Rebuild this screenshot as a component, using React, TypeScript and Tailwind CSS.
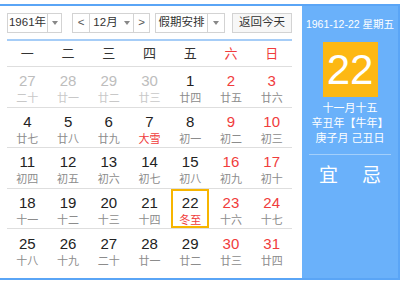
import React from 'react';

type Day = { n: number; l: string; muted?: boolean; red?: boolean; fest?: boolean; sel?: boolean };

const weekNames = ['一', '二', '三', '四', '五', '六', '日'];

const rows: Day[][] = [
  [
    { n: 27, l: '二十', muted: true },
    { n: 28, l: '廿一', muted: true },
    { n: 29, l: '廿二', muted: true },
    { n: 30, l: '廿三', muted: true },
    { n: 1, l: '廿四' },
    { n: 2, l: '廿五', red: true },
    { n: 3, l: '廿六', red: true },
  ],
  [
    { n: 4, l: '廿七' },
    { n: 5, l: '廿八' },
    { n: 6, l: '廿九' },
    { n: 7, l: '大雪', fest: true },
    { n: 8, l: '初一' },
    { n: 9, l: '初二', red: true },
    { n: 10, l: '初三', red: true },
  ],
  [
    { n: 11, l: '初四' },
    { n: 12, l: '初五' },
    { n: 13, l: '初六' },
    { n: 14, l: '初七' },
    { n: 15, l: '初八' },
    { n: 16, l: '初九', red: true },
    { n: 17, l: '初十', red: true },
  ],
  [
    { n: 18, l: '十一' },
    { n: 19, l: '十二' },
    { n: 20, l: '十三' },
    { n: 21, l: '十四' },
    { n: 22, l: '冬至', fest: true, sel: true },
    { n: 23, l: '十六', red: true },
    { n: 24, l: '十七', red: true },
  ],
  [
    { n: 25, l: '十八' },
    { n: 26, l: '十九' },
    { n: 27, l: '二十' },
    { n: 28, l: '廿一' },
    { n: 29, l: '廿二' },
    { n: 30, l: '廿三', red: true },
    { n: 31, l: '廿四', red: true },
  ],
];

function Caret() {
  return <span className="block w-0 h-0 border-x-[3px] border-x-transparent border-t-[4px] border-t-[#888]" />;
}

function DayCell({ d }: { d: Day }) {
  const numColor = d.muted ? 'text-[#bdbdbd]' : d.red ? 'text-[#f03c3c]' : 'text-[#222]';
  const lunarColor = d.muted ? 'text-[#c8c8c8]' : d.fest ? 'text-[#f03c3c]' : 'text-[#8c8c8c]';
  return (
    <div className="flex items-center justify-center">
      <div
        className={
          'w-[38px] h-[39px] flex flex-col items-center ' +
          (d.sel ? 'border-2 border-[#f7b500] pt-[2px]' : 'pt-[4px]')
        }
      >
        <span className={'text-[15px] leading-[20px] ' + numColor}>{d.n}</span>
        <span className={'text-[11px] leading-[14px] ' + lunarColor}>{d.l}</span>
      </div>
    </div>
  );
}

export default function App() {
  return (
    <div
      className="w-[400px] h-[282px] bg-white overflow-hidden pt-[4px]"
      style={{ fontFamily: '"Liberation Sans", Arial, "Noto Sans CJK SC", sans-serif' }}
    >
      <div className="flex h-[276px] border-y-2 border-r-2 border-[#5aa5f6]">
        {/* ---- 左侧日历 ---- */}
        <div className="w-[302px] shrink-0 pl-[7px] pr-[10px] bg-white">
          <div className="flex items-center h-[20px] mt-[7px] text-[11.5px] text-[#333]">
            <div className="flex h-[20px] w-[55px] border border-[#d3d3d3] bg-white">
              <span className="flex-1 flex items-center justify-center border-r border-[#d3d3d3]">1961年</span>
              <span className="w-[13px] flex items-center justify-center"><Caret /></span>
            </div>
            <div className="flex h-[20px] w-[78px] ml-[10px] border border-[#d3d3d3] bg-white">
              <span className="w-[17px] flex items-center justify-center border-r border-[#d3d3d3] text-[#555]">&lt;</span>
              <span className="flex-1 flex items-center justify-center gap-[6px] border-r border-[#d3d3d3]">
                12月<Caret />
              </span>
              <span className="w-[15px] flex items-center justify-center text-[#555]">&gt;</span>
            </div>
            <div className="flex h-[20px] w-[70px] ml-[5px] border border-[#d3d3d3] bg-white">
              <span className="flex-1 flex items-center justify-center border-r border-[#d3d3d3] whitespace-nowrap">假期安排</span>
              <span className="w-[16px] flex items-center justify-center"><Caret /></span>
            </div>
            <div className="flex h-[20px] w-[60px] ml-[7px] items-center justify-center border border-[#d3d3d3] bg-[#f7f7f7]">
              返回今天
            </div>
          </div>
          <div className="mt-[6px] h-[2px] bg-[#a6cdf7]" />

          <div className="grid grid-cols-7 h-[26px] border-b border-[#dedede] items-center text-[13px]">
            {weekNames.map((w, i) => (
              <span key={w} className={'text-center ' + (i >= 5 ? 'text-[#f03c3c]' : 'text-[#333]')}>
                {w}
              </span>
            ))}
          </div>

          {rows.map((r, ri) => (
            <div
              key={ri}
              className={'grid grid-cols-7 h-[40.5px] ' + (ri < rows.length - 1 ? 'border-b border-[#dedede]' : '')}
            >
              {r.map((d, di) => (
                <DayCell key={di} d={d} />
              ))}
            </div>
          ))}
        </div>

        {/* ---- 右侧详情 ---- */}
        <div className="flex-1 min-w-0 bg-[#6ab1fa] flex flex-col items-center text-white">
          <div className="mt-[11px] text-[10.5px] leading-[14px] whitespace-nowrap">1961-12-22 星期五</div>
          <div className="mt-[11px] w-[55px] h-[55px] bg-[#fdb813] flex items-center justify-center text-[42px] leading-none">
            22
          </div>
          <div className="mt-[4px] text-[11px] leading-[15px] text-center whitespace-nowrap">
            <div>十一月十五</div>
            <div>辛丑年【牛年】</div>
            <div>庚子月 己丑日</div>
          </div>
          <div className="mt-[8px] w-[82px] h-px bg-[#a3cffb]" />
          <div className="mt-[10px] flex gap-[24px] text-[19px] leading-[22px]">
            <span>宜</span>
            <span>忌</span>
          </div>
        </div>
      </div>
    </div>
  );
}
